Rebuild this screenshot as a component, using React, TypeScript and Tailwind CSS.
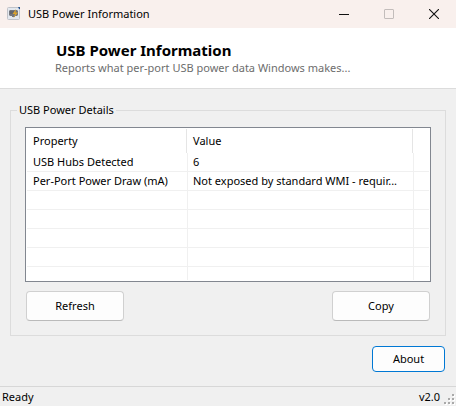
import React from "react";

type Row = { property: string; value: string };

const rows: Row[] = [
  { property: "USB Hubs Detected", value: "6" },
  { property: "Per-Port Power Draw (mA)", value: "Not exposed by standard WMI - requir..." },
  { property: "", value: "" },
  { property: "", value: "" },
  { property: "", value: "" },
  { property: "", value: "" },
];

function AppIcon() {
  return (
    <svg width="14" height="14" viewBox="0 0 14 14" aria-hidden="true">
      <rect x="0.5" y="0.5" width="12" height="12" rx="1" fill="#e3e8ef" stroke="#c0c3c9" />
      <path d="M2 4l1-1h7l1 1v4l-1 1H8v1H5V9H3L2 8z" fill="#73767d" />
      <path d="M3 4h4v3H3z" fill="#62656d" />
      <path d="M9 2L5.500 7H8l-1.500 4L11 5.500H8.500z" fill="#dba32c" />
      <path d="M11 0h2v2h-1z" fill="#27548f" />
    </svg>
  );
}

function TitleBar() {
  return (
    <header className="flex h-7 items-center bg-[#f9f0ed] pl-[7px]">
      <AppIcon />
      <span className="ml-[7px] flex-1">USB Power Information</span>
      <button type="button" aria-label="Minimize" className="flex h-6 w-[45px] items-center justify-center">
        <svg width="10" height="10" viewBox="0 0 10 10">
          <path d="M0 5.500h10" stroke="#111" />
        </svg>
      </button>
      <button type="button" aria-label="Maximize" disabled className="flex h-6 w-[45px] items-center justify-center">
        <svg width="10" height="10" viewBox="0 0 10 10">
          <rect x="0.5" y="0.5" width="9" height="9" rx="0.5" fill="none" stroke="#c3bdbb" />
        </svg>
      </button>
      <button type="button" aria-label="Close" className="flex h-6 w-[45px] items-center justify-center">
        <svg width="10" height="10" viewBox="0 0 10 10">
          <path d="M0 0l10 10M10 0L0 10" stroke="#111" strokeWidth="1.1" />
        </svg>
      </button>
    </header>
  );
}

function DetailsTable() {
  return (
    <div className="border border-[#828790] bg-white p-px">
      <table className="w-full table-fixed border-separate border-spacing-0 text-left">
        <colgroup>
          <col className="w-[161px]" />
          <col />
          <col className="w-[15px]" />
        </colgroup>
        <thead>
          <tr>
            <th scope="col" className="p-0 pr-px font-normal">
              <div className="h-6 border-r border-[#e5e5e5] pl-1.5 leading-6">Property</div>
            </th>
            <th scope="col" className="p-0 pr-px font-normal">
              <div className="h-6 border-r border-[#e5e5e5] pl-[5px] leading-6">Value</div>
            </th>
            <td className="p-0" />
          </tr>
        </thead>
        <tbody>
          {rows.map((row, i) => (
            <tr key={i} className="h-[19px] leading-[18px]">
              <td className="truncate border-r border-b border-[#f0f0f0] p-0 pl-1.5">{row.property}</td>
              <td className="truncate border-r border-b border-[#f0f0f0] p-0 pl-[5px]">{row.value}</td>
              <td className="border-b border-[#f0f0f0] p-0" />
            </tr>
          ))}
          <tr className="h-[13px]">
            <td className="border-r border-[#f0f0f0] p-0" />
            <td className="border-r border-[#f0f0f0] p-0" />
            <td className="p-0" />
          </tr>
        </tbody>
      </table>
    </div>
  );
}

function ActionButton({ children }: { children: React.ReactNode }) {
  return (
    <button
      type="button"
      className="h-[30px] w-[98px] rounded border border-[#d0d0d0] border-b-[#bababa] bg-[#fdfdfd]"
    >
      {children}
    </button>
  );
}

function SizeGrip() {
  const dots = [
    [8, 0],
    [4, 4],
    [8, 4],
    [0, 8],
    [4, 8],
    [8, 8],
  ];
  return (
    <svg width="12" height="12" viewBox="0 0 12 12" aria-hidden="true">
      {dots.map(([x, y]) => (
        <g key={`${x}-${y}`}>
          <rect x={x + 1} y={y + 1} width="2" height="2" fill="#fff" />
          <rect x={x} y={y} width="2" height="2" fill="#a9a9a9" />
        </g>
      ))}
    </svg>
  );
}

export default function App() {
  return (
    <div className="flex min-h-screen flex-col bg-[#f0f0f0] font-['Noto_Sans','Open_Sans',sans-serif] text-[11px] leading-4 text-black">
      <TitleBar />
      <section className="h-[61px] border-b border-[#dcdcdc] bg-white pt-3 pl-[55px]">
        <h1 className="pl-px text-[15px] leading-5 font-bold">USB Power Information</h1>
        <p className="text-[#6d6d6d]">Reports what per-port USB power data Windows makes...</p>
      </section>
      <main className="flex flex-1 flex-col px-2.5 pt-[13px]">
        <fieldset className="min-w-0 border border-[#dcdcdc] px-3.5 pb-3.5">
          <legend className="-ml-2 px-0.5">USB Power Details</legend>
          <div className="pt-[9px]">
            <DetailsTable />
          </div>
          <div className="mt-[9px] flex justify-between px-px">
            <ActionButton>Refresh</ActionButton>
            <ActionButton>Copy</ActionButton>
          </div>
        </fieldset>
        <div className="flex justify-end pt-2.5 pr-px">
          <button type="button" className="h-[26px] w-[73px] rounded border border-[#0078d4] bg-[#fdfdfd]">
            About
          </button>
        </div>
      </main>
      <footer className="flex h-5 items-end border-t border-[#d7d7d7] pl-0.5">
        <span className="flex-1 self-center">Ready</span>
        <span className="mr-1 self-center">v2.0</span>
        <SizeGrip />
      </footer>
    </div>
  );
}
